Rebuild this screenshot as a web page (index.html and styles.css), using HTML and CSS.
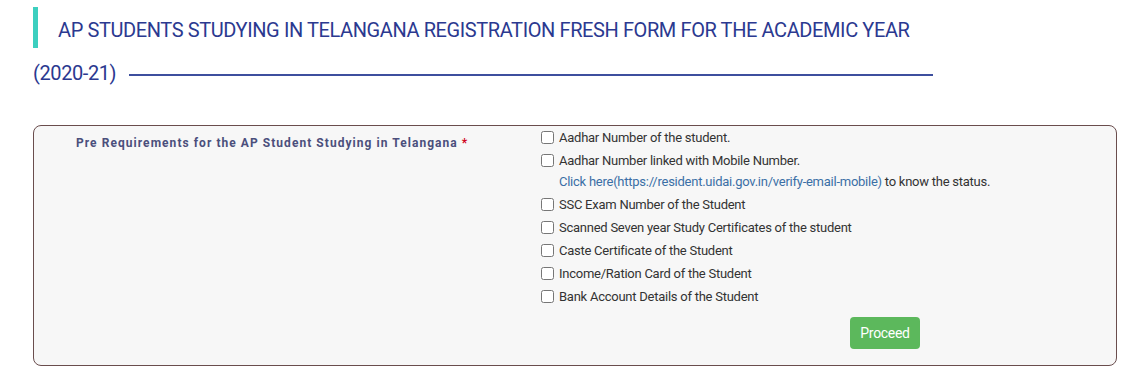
FILE: index.html
```html
<!DOCTYPE html>
<html lang="en">
<head>
<meta charset="utf-8">
<title>AP Students Studying in Telangana Registration</title>
<link rel="stylesheet" href="styles.css">
</head>
<body>
  <div class="page">
    <h1 class="page-title"><span class="page-title__text">AP STUDENTS STUDYING IN TELANGANA REGISTRATION FRESH FORM FOR THE ACADEMIC YEAR (2020-21)</span></h1>

    <form class="req-box">
      <div class="req-label">Pre Requirements for the AP Student Studying in Telangana <span class="req-star">*</span></div>
      <div class="req-options">
        <label class="opt"><input type="checkbox" class="opt__box"><span class="opt__text">Aadhar Number of the student.</span></label>
        <label class="opt"><input type="checkbox" class="opt__box"><span class="opt__text">Aadhar Number linked with Mobile Number.<br><a class="opt__link" href="#">Click here(https://resident.uidai.gov.in/verify-email-mobile)</a> to know the status.</span></label>
        <label class="opt"><input type="checkbox" class="opt__box"><span class="opt__text">SSC Exam Number of the Student</span></label>
        <label class="opt"><input type="checkbox" class="opt__box"><span class="opt__text">Scanned Seven year Study Certificates of the student</span></label>
        <label class="opt"><input type="checkbox" class="opt__box"><span class="opt__text">Caste Certificate of the Student</span></label>
        <label class="opt"><input type="checkbox" class="opt__box"><span class="opt__text">Income/Ration Card of the Student</span></label>
        <label class="opt"><input type="checkbox" class="opt__box"><span class="opt__text">Bank Account Details of the Student</span></label>
        <div class="actions"><button type="button" class="btn-proceed">Proceed</button></div>
      </div>
    </form>
  </div>
</body>
</html>
```

FILE: styles.css
```css
* { box-sizing: border-box; }

html, body {
  margin: 0;
  padding: 0;
  background: #ffffff;
  font-family: Roboto, "Liberation Sans", Arial, sans-serif;
}

.page {
  padding: 9px 13px 0 33px;
}

.page-title {
  margin: 0;
  width: 920px;
  font-size: 20px;
  font-weight: 400;
  line-height: 43px;
  letter-spacing: -0.4px;
  color: #2b3990;
}

.page-title__text {
  border-left: 5px solid #3ccfbf;
  padding: 11px 0 6px 20px;
}

.page-title__text::after {
  content: "";
  display: inline-block;
  width: 804px;
  height: 2px;
  margin-left: 13px;
  background: #3d4f9e;
  vertical-align: middle;
}

.req-box {
  margin: 30px 0 0 0;
  display: grid;
  grid-template-columns: 507px 1fr;
  background: #f7f7f7;
  border: 1px solid #6a4d4d;
  border-radius: 8px;
  padding: 0 0 16px 0;
}

.req-label {
  padding: 7px 0 0 42px;
  font-size: 12px;
  line-height: 20px;
  font-weight: 700;
  letter-spacing: 1.05px;
  color: #4b4f7c;
}

.req-star {
  color: #d0021b;
}

.req-options {
  padding-top: 1px;
  font-size: 13px;
  color: #333333;
}

.opt {
  display: flex;
  align-items: flex-start;
  line-height: 21px;
  margin-bottom: 2px;
}

.opt__box {
  width: 13px;
  height: 13px;
  margin: 4px 5px 0 0;
  flex: none;
}

.opt__text {
  letter-spacing: -0.25px;
}

.opt__link {
  color: #3b6fa6;
  text-decoration: none;
}

.actions {
  padding: 8px 0 0 309px;
}

.btn-proceed {
  width: 70px;
  height: 32px;
  border: none;
  border-radius: 4px;
  background: #5cb85c;
  color: #ffffff;
  font-family: Roboto, "Liberation Sans", Arial, sans-serif;
  font-size: 14px;
  letter-spacing: -0.3px;
  padding: 0;
}
```
